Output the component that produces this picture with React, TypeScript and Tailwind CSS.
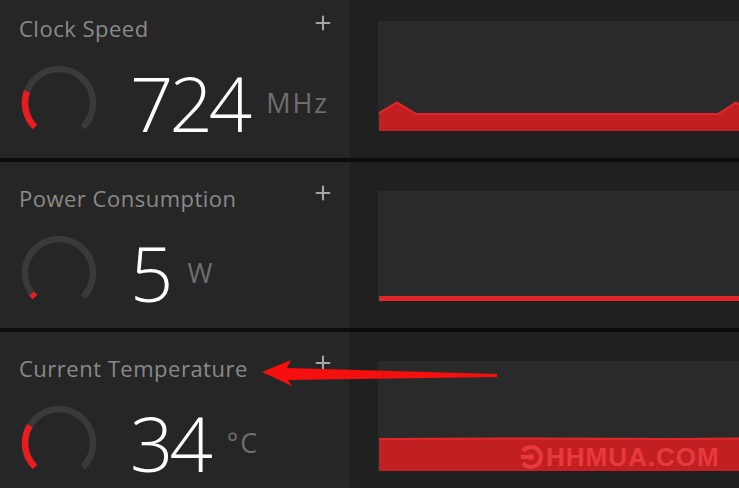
import { Plus } from 'lucide-react'

const ARC = 2 * Math.PI * 34

function Gauge({ frac }: { frac: number }) {
  const track = ARC * 0.75
  return (
    <svg width={80} height={80} viewBox="0 0 80 80" className="shrink-0">
      <circle cx={40} cy={40} r={34} fill="none" stroke="#3a3a3a" strokeWidth={6.5}
        strokeDasharray={`${track} ${ARC}`} transform="rotate(135 40 40)" />
      <circle cx={40} cy={40} r={34} fill="none" stroke="#e81d1f" strokeWidth={6.5}
        strokeDasharray={`${track * frac} ${ARC}`} transform="rotate(135 40 40)" />
    </svg>
  )
}

function Chart({ kind }: { kind: 'clock' | 'power' | 'temp' }) {
  return (
    <svg width={362} height={110} viewBox="0 0 362 110" className="block">
      {kind === 'clock' && (
        <>
          <polygon points="1,92 19,81.5 38,93 340,93 358,81.5 362,84 362,110 1,110" fill="#c21f23" />
          <polyline points="1,92 19,81.5 38,93 340,93 358,81.5 362,84" fill="none" stroke="#e3262b" strokeWidth={2} />
        </>
      )}
      {kind === 'power' && <rect x={1} y={105} width={361} height={5} fill="#e3262b" />}
      {kind === 'temp' && (
        <>
          <polygon points="1,78 150,77.5 300,78 362,77.5 362,110 1,110" fill="#c21f23" />
          <polyline points="1,78 150,77.5 300,78 362,77.5" fill="none" stroke="#e3262b" strokeWidth={2} />
        </>
      )}
    </svg>
  )
}

function Row({ title, value, unit, frac, kind, last, children }: {
  title: string; value: string; unit: string; frac: number; kind: 'clock' | 'power' | 'temp'; last?: boolean; children?: React.ReactNode
}) {
  return (
    <div className={`flex shrink-0 ${last ? 'h-[156px]' : 'h-[166px]'}`}>
      <div className="w-[350px] bg-[#262626] flex flex-col">
        <div className="flex items-start justify-between pt-[20px] pl-[19px] pr-[16px]">
          <span className="mt-[2px] text-[22px] leading-[28px] font-medium tracking-[0.5px] text-[#8a8a8a]">{title}</span>
          <Plus size={22} strokeWidth={2.2} className="text-[#a6a6a6]" />
        </div>
        <div className="flex items-center mt-[21px] pl-[19px]">
          <Gauge frac={frac} />
          <span className="ml-[31px] pr-[4px] text-[76px] leading-[76px] font-light text-white tracking-[-4px]">{value}</span>
          <span className="ml-[14px] text-[27px] leading-[30px] tracking-[2px] text-[#6e6e6e]">{unit}</span>
        </div>
      </div>
      <div className="flex-1 bg-[#202020] pl-[27px] pt-[29px] border-l border-[#1c1c1c]">
        <div className="relative h-[110px] bg-[#2a2a2a] overflow-hidden">
          <div className="absolute left-0 bottom-0">
            <Chart kind={kind} />
          </div>
          {children}
        </div>
      </div>
    </div>
  )
}

export default function App() {
  return (
    <div className="relative h-[488px] w-[739px] overflow-hidden bg-[#0c0c0c] font-['Open_Sans','Noto_Sans',sans-serif]">
      <div className="-mt-[8px] flex flex-col gap-[4px]">
        <Row title="Clock Speed" value="724" unit="MHz" frac={0.24} kind="clock" />
        <Row title="Power Consumption" value="5" unit="W" frac={0.03} kind="power" />
        <Row title="Current Temperature" value="34" unit="°C" frac={0.28} kind="temp" last>
          {/* watermark */}
          <div className="absolute left-[141px] top-[82px] flex items-center gap-[3px] text-[#e8393d]">
            <svg width={24} height={24} viewBox="0 0 24 24">
              <path d="M4 6 A10 10 0 1 1 4 18" fill="none" stroke="#e8393d" strokeWidth={4} />
              <rect x={2} y={10} width={10} height={4} fill="#e8393d" />
              <circle cx={12} cy={12} r={3} fill="#e8393d" />
            </svg>
            <span className="font-['Liberation_Sans',sans-serif] font-bold text-[26px] leading-[28px] tracking-[1px]">HHMUA.COM</span>
          </div>
        </Row>
      </div>
      {/* annotation arrow */}
      <svg width={739} height={488} className="absolute left-0 top-0 pointer-events-none">
        <polygon points="262,372 291,360 287,368 497,374 497,377 288,380 292,386" fill="#f50f0f" />
      </svg>
    </div>
  )
}
